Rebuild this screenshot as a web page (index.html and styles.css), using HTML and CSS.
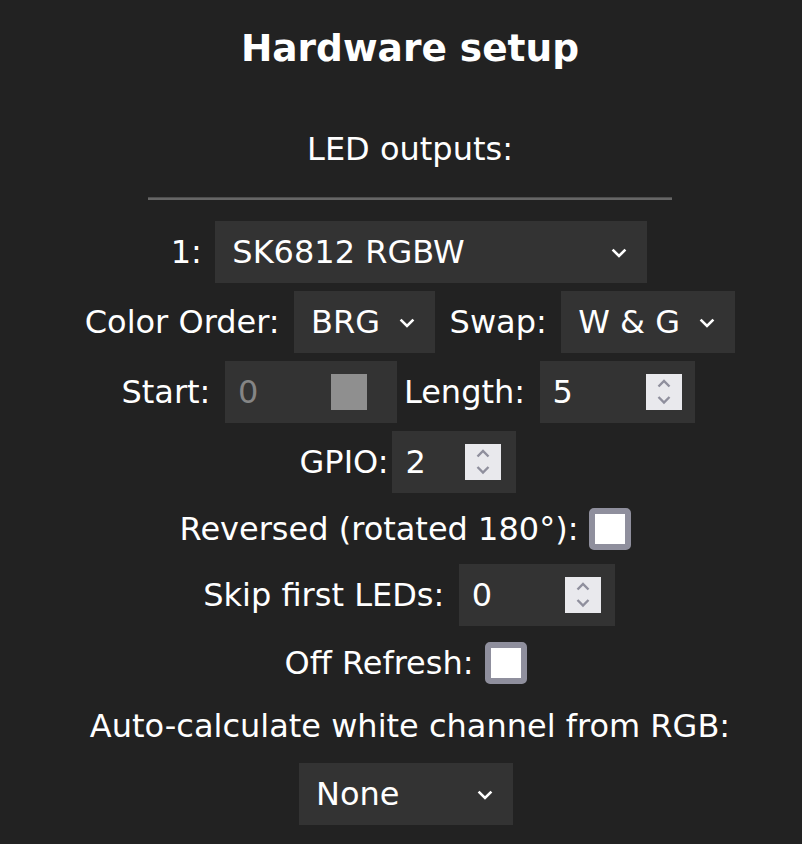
FILE: index.html
```html
<!DOCTYPE html>
<html lang="en">
<head>
<meta charset="utf-8">
<title>Hardware setup</title>
<link rel="stylesheet" href="styles.css">
</head>
<body>
<h2 class="title">Hardware setup</h2>
<div class="subtitle">LED outputs:</div>
<hr class="divider">

<div class="row">
  <span class="label">1:</span>
  <span class="select w-type"><span class="val">SK6812 RGBW</span><svg class="chev" viewBox="0 0 16 10" width="16" height="10"><path d="M1.6 1.6 L8 8 L14.4 1.6" fill="none" stroke="#fff" stroke-width="2.6"/></svg></span>
</div>

<div class="row">
  <span class="label">Color Order:</span>
  <span class="select w-order"><span class="val">BRG</span><svg class="chev" viewBox="0 0 16 10" width="16" height="10"><path d="M1.6 1.6 L8 8 L14.4 1.6" fill="none" stroke="#fff" stroke-width="2.6"/></svg></span>
  <span class="label">Swap:</span>
  <span class="select w-swap"><span class="val">W &amp; G</span><svg class="chev" viewBox="0 0 16 10" width="16" height="10"><path d="M1.6 1.6 L8 8 L14.4 1.6" fill="none" stroke="#fff" stroke-width="2.6"/></svg></span>
</div>

<div class="row">
  <span class="label">Start:</span>
  <span class="num w-start disabled"><span class="val">0</span><span class="spin-off"></span></span>
  <span class="label tight">Length:</span>
  <span class="num w-len"><span class="val">5</span><svg class="spin" viewBox="0 0 36 36" width="36" height="36"><rect width="36" height="36" fill="#e9e9ed"/><path d="M12.5 12.5 L18 7 L23.5 12.5 M12.5 23 L18 28.5 L23.5 23" fill="none" stroke="#8f8f9d" stroke-width="2.4"/></svg></span>
</div>

<div class="row">
  <span class="label">GPIO:</span>
  <span class="num w-gpio"><span class="val">2</span><svg class="spin" viewBox="0 0 36 36" width="36" height="36"><rect width="36" height="36" fill="#e9e9ed"/><path d="M12.5 12.5 L18 7 L23.5 12.5 M12.5 23 L18 28.5 L23.5 23" fill="none" stroke="#8f8f9d" stroke-width="2.4"/></svg></span>
</div>

<div class="row row-check first-check">
  <span class="label">Reversed (rotated 180°):</span>
  <span class="check"></span>
</div>

<div class="row">
  <span class="label">Skip first LEDs:</span>
  <span class="num w-skip"><span class="val">0</span><svg class="spin" viewBox="0 0 36 36" width="36" height="36"><rect width="36" height="36" fill="#e9e9ed"/><path d="M12.5 12.5 L18 7 L23.5 12.5 M12.5 23 L18 28.5 L23.5 23" fill="none" stroke="#8f8f9d" stroke-width="2.4"/></svg></span>
</div>

<div class="row row-check">
  <span class="label">Off Refresh:</span>
  <span class="check"></span>
</div>

<div class="text-line">Auto-calculate white channel from RGB:</div>

<div class="row last-row">
  <span class="select w-none"><span class="val">None</span><svg class="chev" viewBox="0 0 16 10" width="16" height="10"><path d="M1.6 1.6 L8 8 L14.4 1.6" fill="none" stroke="#fff" stroke-width="2.6"/></svg></span>
</div>
</body>
</html>
```

FILE: styles.css
```css
html, body {
  background: #222;
}
body {
  margin: 0;
  padding: 0 0 0 18px;
  color: #fff;
  font-family: "DejaVu Sans", Verdana, sans-serif;
  font-size: 32px;
  text-align: center;
}
.title {
  margin: 25.5px 0 0;
  font-size: 37.5px;
  font-weight: bold;
  line-height: normal;
}
.subtitle {
  margin-top: 60.5px;
  line-height: normal;
}
.divider {
  width: 524px;
  height: 2px;
  margin: 29px auto 17px;
  border: none;
  border-top: 1px solid #4e4e4e;
  background: #666;
}
.row {
  display: flex;
  justify-content: center;
  align-items: center;
  padding: 4px 0;
}
.row > * + * {
  margin-left: 14.5px;
}
.row > .label.tight {
  margin-left: 7px;
}
.label {
  white-space: nowrap;
}
.select, .num {
  box-sizing: border-box;
  display: flex;
  align-items: center;
  height: 62px;
  background: #333;
  color: #fff;
  white-space: nowrap;
}
.select {
  padding: 0 20px 0 17px;
}
.select .val {
  flex: 1;
  text-align: left;
}
.chev {
  display: block;
  margin-top: 2px;
}
.w-type { width: 432px; margin-right: 2px; }
.row > .w-type { margin-left: 13.5px; }
.w-order { width: 141px; }
.w-swap { width: 174px; }
.w-none { width: 214px; margin-right: 8px; }

.num {
  padding: 0 13px 0 13px;
}
.num .val {
  flex: 1;
  text-align: left;
}
.num.disabled .val {
  color: #858585;
}
.spin {
  display: block;
}
.spin-off {
  display: block;
  width: 36px;
  height: 36px;
  background: #8f8f8f;
}
.w-start { width: 172px; padding-right: 30px; }
.w-len { width: 155px; margin-right: 4px; }
.row > .w-gpio { width: 124px; padding-right: 15px; margin-left: 4px; margin-right: 4px; }
.w-skip { width: 156px; padding-right: 14px; margin-right: 2px; }

.row-check {
  padding: 12px 0;
}
.row-check.first-check {
  padding: 10.5px 0;
}
.row > .check {
  box-sizing: border-box;
  display: block;
  width: 42px;
  height: 42px;
  margin-left: 11px;
  margin-right: 9px;
  border: 6px solid #8f8f9d;
  border-radius: 5px;
  background: #fff;
}
.text-line {
  margin-top: 11px;
  line-height: normal;
}
.last-row {
  margin-top: 13.5px;
}
```
